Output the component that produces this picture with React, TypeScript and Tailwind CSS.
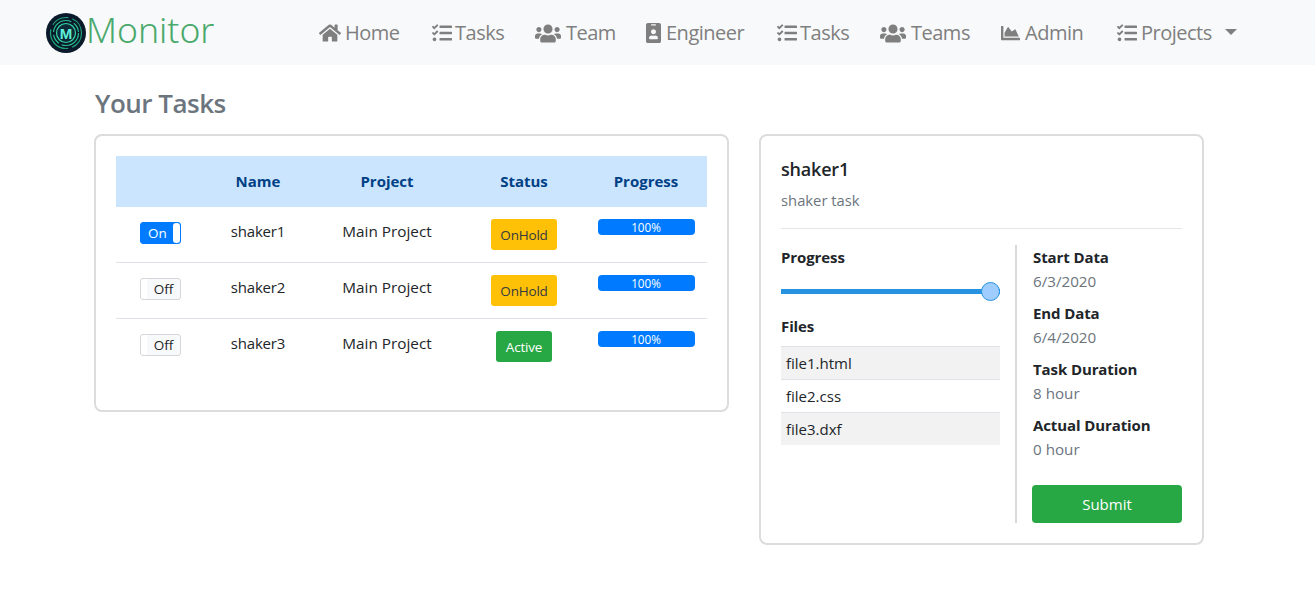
import { IconType } from "react-icons";
import { FaChartArea, FaHome, FaIdBadge, FaTasks, FaUsers } from "react-icons/fa";

const navItems: { label: string; icon: IconType; width: string; iconSize: string }[] = [
  { label: "Home", icon: FaHome, width: "w-[113px]", iconSize: "h-[20px] w-[22px] -mr-[1px]" },
  { label: "Tasks", icon: FaTasks, width: "w-[103px]", iconSize: "h-[20px] w-[20px] -mr-[2px]" },
  { label: "Team", icon: FaUsers, width: "w-[111px]", iconSize: "h-[21px] w-[26px]" },
  { label: "Engineer", icon: FaIdBadge, width: "w-[131px]", iconSize: "h-[20px] w-[15px]" },
  { label: "Tasks", icon: FaTasks, width: "w-[103px]", iconSize: "h-[20px] w-[20px] -mr-[2px]" },
  { label: "Teams", icon: FaUsers, width: "w-[121px]", iconSize: "h-[21px] w-[26px]" },
  { label: "Admin", icon: FaChartArea, width: "w-[116px]", iconSize: "h-[20px] w-[19px]" },
];

const tasks = [
  { name: "shaker1", on: true, status: "OnHold" },
  { name: "shaker2", on: false, status: "OnHold" },
  { name: "shaker3", on: false, status: "Active" },
];

const details = [
  { label: "Start Data", value: "6/3/2020" },
  { label: "End Data", value: "6/4/2020" },
  { label: "Task Duration", value: "8 hour" },
  { label: "Actual Duration", value: "0 hour" },
];

const Logo = () => (
  <svg viewBox="0 0 40 40" className="h-10 w-10 shrink-0">
    <circle cx="20" cy="20" r="20" fill="#0b1a2b" />
    <circle cx="20" cy="20" r="15.5" fill="none" stroke="#1fa37a" strokeWidth="1.2" strokeDasharray="18 4 30 5" />
    <circle cx="20" cy="20" r="12.5" fill="none" stroke="#27c08f" strokeWidth="1.2" strokeDasharray="24 3 10 3" />
    <circle cx="20" cy="20" r="9.5" fill="#0d2a38" stroke="#35d6a6" strokeWidth="1.2" />
    <text x="20" y="25.5" textAnchor="middle" fontSize="15" fontWeight="700" fill="#5ff0d8" fontFamily="Liberation Sans, sans-serif">
      M
    </text>
  </svg>
);

const Toggle = ({ on }: { on: boolean }) =>
  on ? (
    <div className="flex h-[22px] w-[41px] items-center rounded-[3px] border border-[#007bff] bg-[#007bff] text-[13.5px] text-white">
      <span className="flex-1 pl-px text-center">On</span>
      <span className="h-[20px] w-[7px] rounded-[3px] bg-white" />
    </div>
  ) : (
    <div className="flex h-[22px] w-[41px] items-center rounded-[3px] border border-[#d4d6d9] bg-[#f8f9fa] text-[13.5px] text-[#212529]">
      <span className="h-[20px] w-[6px] rounded-l-[3px] bg-white" />
      <span className="flex-1 text-center">Off</span>
    </div>
  );

const App = () => {
  return (
    <div className="h-[598px] overflow-hidden bg-white font-['Open_Sans','Noto_Sans',sans-serif] text-[#212529]">
      <nav className="flex h-[65px] items-start bg-[#f8f9fa] pl-[46px]">
        <div className="flex w-[273px] items-start pt-[13px]">
          <Logo />
          <span className="-mt-[4px] font-['Noto_Sans',sans-serif] text-[35.5px] leading-[40px] font-light text-[#4aa96c]">Monitor</span>
        </div>
        <ul className="flex items-center pt-[19px] text-[20px] leading-[28px] text-[#7f7f7f]">
          {navItems.map((item, i) => (
            <li key={i} className={`flex items-center gap-[5px] ${item.width} tracking-[-0.5px]`}>
              <item.icon className={`shrink-0 ${item.iconSize}`} />
              {item.label}
            </li>
          ))}
          <li className="flex items-center gap-[5px] tracking-[-0.5px]">
            <FaTasks className="-mr-[1px] h-[20px] w-[20px] shrink-0" />
            Projects
            <span className="mb-[3px] ml-[8px] h-0 w-0 border-x-[6px] border-t-[6px] border-x-transparent border-t-[#7f7f7f]" />
          </li>
        </ul>
      </nav>

      <main className="pl-[94px]">
        <h1 className="ml-px pt-[21px] pb-[13px] text-[26px] leading-[35px] font-semibold tracking-[-0.5px] text-[#6c757d]">Your Tasks</h1>
        <div className="flex items-start gap-[30px]">
          <section className="h-[278px] w-[635px] rounded-lg border-2 border-[#dcdcdc] p-5">
            <table className="w-[591px] table-fixed border-separate border-spacing-0 text-center">
              <thead>
                <tr className="h-[51px] bg-[#cce5ff] text-[15px] font-bold text-[#004085]">
                  <th className="w-[89px]"></th>
                  <th className="w-[106px]">Name</th>
                  <th className="w-[152px]">Project</th>
                  <th className="w-[122px]">Status</th>
                  <th className="w-[122px]">Progress</th>
                </tr>
              </thead>
              <tbody>
                {tasks.map((task, i) => {
                  const cell = `h-[56px] align-top ${i < 2 ? "border-b border-[#dee2e6]" : ""}`;
                  return (
                    <tr key={task.name} className="text-[15px]">
                      <td className={`${cell} pt-[15px]`}>
                        <div className="ml-6">
                          <Toggle on={task.on} />
                        </div>
                      </td>
                      <td className={`${cell} pt-[13px] leading-[22px] tracking-[-0.2px]`}>{task.name}</td>
                      <td className={`${cell} pt-[13px] text-[15.3px] leading-[22px]`}>Main Project</td>
                      <td className={`${cell} pt-[12px]`}>
                        <span
                          className={`inline-block h-[31px] rounded-[3px] px-[9.5px] text-[13.5px] leading-[32px] tracking-[-0.2px] ${
                            task.status === "Active" ? "bg-[#28a745] text-white" : "bg-[#ffc107] text-[#343a40]"
                          }`}
                        >
                          {task.status}
                        </span>
                      </td>
                      <td className={`${cell} pt-[12px]`}>
                        <div className="mx-auto h-4 w-[97px] rounded-[4px] bg-[#007bff] text-[11.7px] leading-4 text-white">100%</div>
                      </td>
                    </tr>
                  );
                })}
              </tbody>
            </table>
          </section>

          <section className="h-[411px] w-[445px] rounded-lg border-2 border-[#dcdcdc] px-5 pt-5">
            <h2 className="-mt-px text-[18px] leading-[28px] font-semibold tracking-[-0.2px] text-[#212529]">shaker1</h2>
            <p className="mt-[7px] h-[39px] border-b border-[#e3e5e8] text-[14.8px] leading-[20px] text-[#6c757d]">shaker task</p>
            <div className="mt-[16px] flex">
              <div className="w-[219px]">
                <h3 className="pt-[2px] text-[15px] leading-[20px] font-bold tracking-[-0.1px]">Progress</h3>
                <div className="relative mt-[15px] h-[19px]">
                  <div className="absolute top-[7px] left-0 h-[5px] w-full bg-[#2793e0]" />
                  <div className="absolute top-0 right-0 h-[19px] w-[19px] rounded-full border border-[#2793e0] bg-[#9fcdff]" />
                </div>
                <h3 className="mt-[15px] text-[15px] leading-[20px] font-bold tracking-[-0.1px]">Files</h3>
                <ul className="mt-[10px] text-[15px] leading-[32px]">
                  <li className="border-t border-[#dee2e6] bg-[#f2f2f2] pl-[5px]">file1.html</li>
                  <li className="border-t border-[#dee2e6] pl-[5px]">file2.css</li>
                  <li className="border-t border-[#dee2e6] bg-[#f2f2f2] pl-[5px]">file3.dxf</li>
                </ul>
              </div>
              <div className="ml-[15px] flex h-[278px] w-[167px] flex-col border-l-2 border-[#d9d9d9] pl-[15px]">
                {details.map((d) => (
                  <div key={d.label} className="mb-[8px] h-[48px] pt-[2px]">
                    <h3 className="pl-px text-[15px] leading-[20px] font-bold tracking-[-0.1px]">{d.label}</h3>
                    <p className="mt-[4px] pl-px text-[15.2px] leading-[20px] text-[#6c757d]">{d.value}</p>
                  </div>
                ))}
                <button className="mt-auto h-[38px] w-[150px] rounded-[4px] bg-[#28a745] text-[15px] text-white">Submit</button>
              </div>
            </div>
          </section>
        </div>
      </main>
    </div>
  );
};

export default App;
